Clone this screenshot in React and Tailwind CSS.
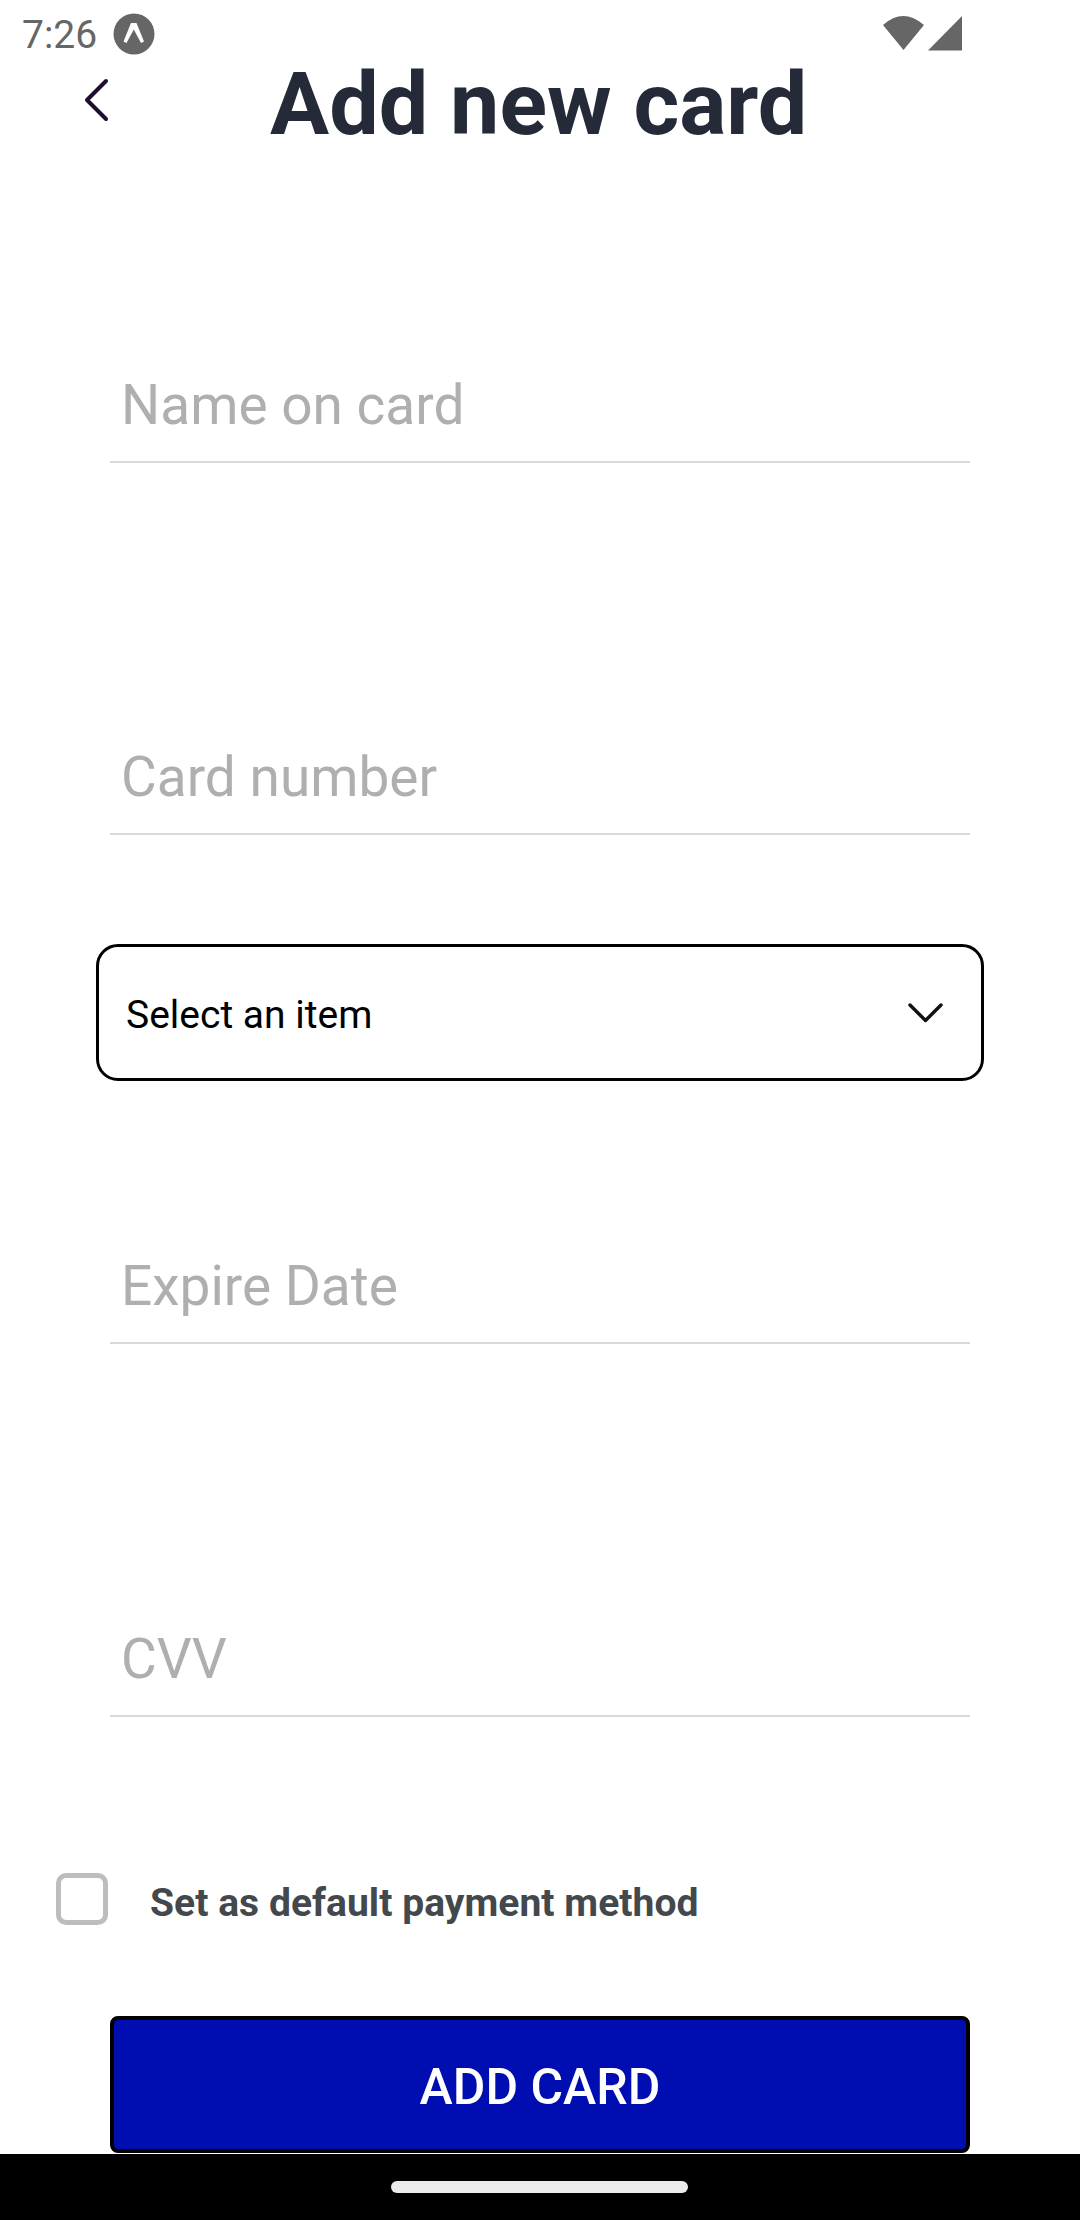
function Field({ label }) {
  return (
    <div className="mx-[110px] flex h-[113px] items-center border-b-2 border-[#d9d9d9] px-[11px] text-[55px] text-[#afafaf]">
      <span>{label}</span>
    </div>
  );
}

export default function App() {
  return (
    <div className="flex h-[2220px] w-[1080px] flex-col bg-white font-['Roboto',sans-serif] leading-none">
      <div className="flex h-[66px] shrink-0 items-center justify-between pt-px pl-[22px] pr-[118px] text-[#666]">
        <div className="flex items-center gap-[16px]">
          <span className="pt-[3px] text-[39px]">7:26</span>
          <svg width="42" height="42" viewBox="0 0 42 42"><circle cx="21" cy="21" r="20.5" fill="#666" /><path d="M10.5 28.5L18 10H23.5L31 28.5L28 30L20.8 16.5L13.5 30Z" fill="#fff" /></svg>
        </div>
        <svg width="80" height="36" viewBox="0 0 80 36" fill="#666"><path d="M1 9Q21-9 42 9L21.5 34ZM80 0V34.5H46Z" /></svg>
      </div>
      <header className="flex h-[78px] shrink-0 items-center">
        <svg className="-mt-[10px] ml-[82px]" width="30" height="46" viewBox="0 0 30 46"><path d="M24 4L5 23L24 42" fill="none" stroke="#200e32" strokeWidth="4" strokeLinecap="round" strokeLinejoin="round" /></svg>
        <h1 className="-mt-[2px] ml-[158px] text-[88px] font-bold text-[#242a38]">Add new card</h1>
      </header>
      <div className="mt-[206px]"><Field label="Name on card" /></div>
      <div className="mt-[259px]"><Field label="Card number" /></div>
      <button type="button" className="mx-[96px] mt-[109px] flex h-[137px] shrink-0 items-center justify-between rounded-[22px] border-[3px] border-black pl-[27px] pr-[36px] text-[39px]">
        <span className="pt-[5px]">Select an item</span>
        <svg width="40" height="24" viewBox="0 0 40 24"><path d="M5 4L20.5 19.5L36 4" fill="none" stroke="#111" strokeWidth="3.4" strokeLinecap="round" strokeLinejoin="round" /></svg>
      </button>
      <div className="mt-[150px]"><Field label="Expire Date" /></div>
      <div className="mt-[260px]"><Field label="CVV" /></div>
      <label className="mt-[156px] flex h-[52px] shrink-0 items-center pl-[56px]">
        <span className="size-[52px] rounded-[10px] border-[5px] border-[#bdbdbd]" />
        <span className="ml-[42px] pt-[9px] text-[39px] font-bold tracking-[0.05px] text-[#43484d]">Set as default payment method</span>
      </label>
      <button type="button" className="mx-[110px] mt-[91px] flex h-[137px] shrink-0 items-center justify-center rounded-[8px] border-4 border-black bg-[#000db0] pt-[5px] text-[50px] font-medium text-white">
        ADD CARD
      </button>
      <footer className="mt-px flex h-[66px] shrink-0 items-center justify-center bg-black pr-px">
        <div className="h-[12px] w-[297px] rounded-full bg-[#ebebeb]" />
      </footer>
    </div>
  );
}
